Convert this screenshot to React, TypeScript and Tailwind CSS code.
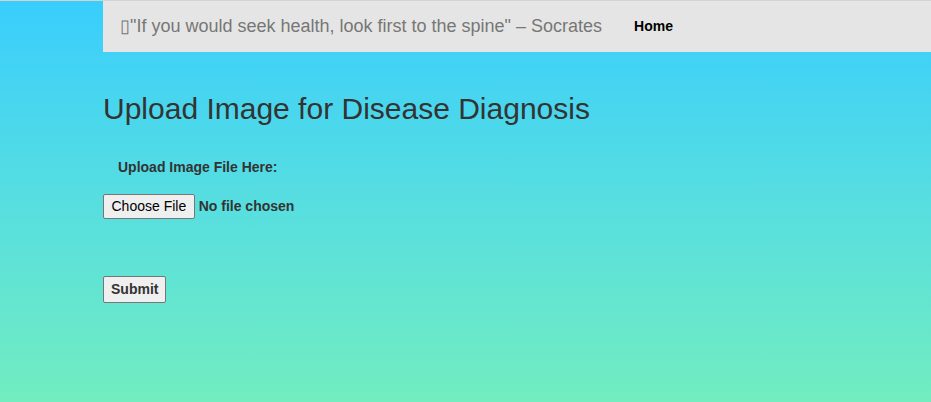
export default function App() {
  return (
    <div className="min-h-[402px] w-full bg-gradient-to-b from-[#38cdfd] to-[#72edbf] font-['Liberation_Sans',Arial,sans-serif] text-[#333]">
      <div className="h-px w-full bg-[#d3d3d3]" />
      <div className="ml-[103px] flex h-[51px] items-center bg-[#e5e5e5]">
        <span className="ml-[17px] text-[18px] text-[#777]">▯"If you would seek health, look first to the spine" – Socrates</span>
        <a className="ml-[32px] text-[14px] font-bold text-black" href="#">Home</a>
      </div>

      <div className="ml-[103px] pt-[39px]">
        <h1 className="text-[30px] leading-[36px] text-[#333]">Upload Image for Disease Diagnosis</h1>
        <form className="mt-[30px]" onSubmit={(e) => e.preventDefault()}>
          <label className="ml-[15px] block text-[14px] font-bold leading-[20px]">Upload Image File Here:</label>
          <input
            type="file"
            className="mt-[17px] block text-[14px] font-bold text-[#333] file:mr-1 file:rounded-[2px] file:border file:border-[#767676] file:bg-[#efefef] file:px-[7.5px] file:py-[1px] file:text-[14px] file:font-normal file:text-black"
          />
          <button
            type="submit"
            className="mt-[57px] rounded-[2px] border border-[#767676] bg-[#efefef] px-[7px] py-[2px] text-[14px] font-bold text-[#333]"
          >
            Submit
          </button>
        </form>
      </div>
    </div>
  );
}
